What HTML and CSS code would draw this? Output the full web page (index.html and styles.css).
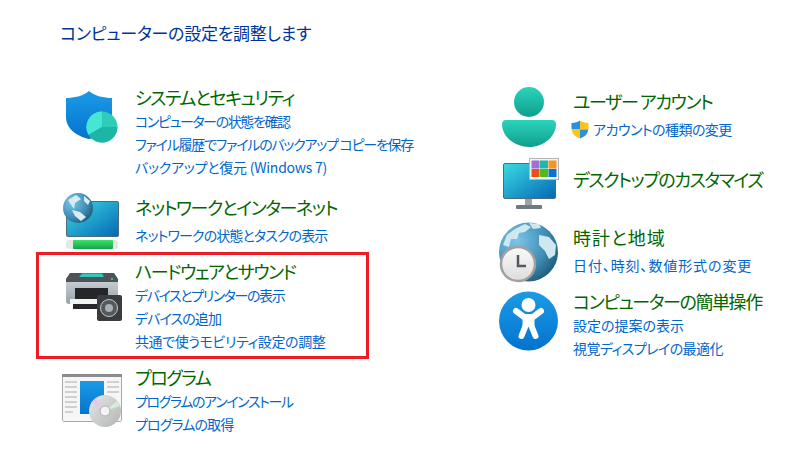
FILE: index.html
```html
<!DOCTYPE html>
<html lang="ja">

<head>
    <meta charset="UTF-8">
    <title>コントロール パネル</title>
    <link rel="stylesheet" href="styles.css">
</head>

<body>
    <svg class="defs" width="0" height="0">
        <defs>
            <linearGradient id="blue" x1="0" y1="0" x2="0" y2="1">
                <stop offset="0" stop-color="#1b9be6" />
                <stop offset="1" stop-color="#0473cf" />
            </linearGradient>
            <linearGradient id="teal" x1="0" y1="0" x2="0" y2="1">
                <stop offset="0" stop-color="#2bd4bc" />
                <stop offset="1" stop-color="#0f9e8c" />
            </linearGradient>
            <linearGradient id="screen" x1="0" y1="0" x2="1" y2="1">
                <stop offset="0" stop-color="#3bdbe4" />
                <stop offset="1" stop-color="#0567b5" />
            </linearGradient>
            <radialGradient id="earth" cx="0.3" cy="0.3" r="0.85">
                <stop offset="0" stop-color="#7cc6e8" />
                <stop offset="0.6" stop-color="#3f8db5" />
                <stop offset="1" stop-color="#17506f" />
            </radialGradient>
            <linearGradient id="bar" x1="0" y1="0" x2="0" y2="1">
                <stop offset="0" stop-color="#3fe06a" />
                <stop offset="1" stop-color="#12a34a" />
            </linearGradient>
            <linearGradient id="disc" x1="0" y1="0" x2="1" y2="1">
                <stop offset="0" stop-color="#e6e8e6" />
                <stop offset="1" stop-color="#b2b5b4" />
            </linearGradient>
            <linearGradient id="printer" x1="0" y1="0" x2="0" y2="1">
                <stop offset="0" stop-color="#d4dce0" />
                <stop offset="1" stop-color="#98a2a8" />
            </linearGradient>
            <linearGradient id="clock-face" x1="0" y1="0" x2="0" y2="1">
                <stop offset="0" stop-color="#fafafa" />
                <stop offset="1" stop-color="#dcdcdc" />
            </linearGradient>
        </defs>
    </svg>

    <h1 class="page-title">コンピューターの設定を調整します</h1>

    <main class="panel">
        <div class="column-left">
            <section class="cat cat-system">
                <svg class="cat-icon" width="70" height="64" viewBox="0 0 70 64">
                    <path d="M29 6 C23 11 14 13 6 13 V32 C6 44 17 51 29 54 C41 51 52 44 52 32 V13 C44 13 35 11 29 6 Z" fill="url(#blue)" />
                    <circle cx="42" cy="42" r="15.5" fill="#2fcdb8" />
                    <path d="M42 42 V26.5 A15.5 15.5 0 0 0 28.6 49.8 Z" fill="#46e6d4" />
                    <path d="M42 42 L28.6 49.8 A15.5 15.5 0 0 0 57.5 42 Z" fill="#1db5a4" />
                </svg>
                <div class="cat-text">
                    <h2 class="head-kana">システムとセキュリティ</h2>
                    <a href="#" class="ls-a">コンピューターの状態を確認</a>
                    <a href="#" class="ls-f">ファイル履歴でファイルのバックアップ コピーを保存</a>
                    <a href="#" class="ls-g">バックアップと復元 (Windows 7)</a>
                </div>
            </section>

            <section class="cat cat-network">
                <svg class="cat-icon" width="70" height="54" viewBox="0 0 70 54">
                    <rect x="6.5" y="6.5" width="52" height="35" rx="1" fill="url(#screen)" stroke="#4f6a78" />
                    <rect x="6" y="45" width="52" height="9" rx="3" fill="#e4e8e4" />
                    <rect x="13" y="45" width="40" height="9" rx="1" fill="url(#bar)" />
                    <circle cx="18" cy="13" r="15" fill="url(#earth)" />
                    <path d="M8 5 L16 0 L21 4 L15 8 L14 14 Z M12 15 L20 17 L26 22 L21 26 L15 21 Z M24 1 L30 6 L28 10 L24 6 Z" fill="#d8edf3" />
                </svg>
                <div class="cat-text cat-text-gap">
                    <h2 class="head-kana">ネットワークとインターネット</h2>
                    <a href="#" class="ls-b">ネットワークの状態とタスクの表示</a>
                </div>
            </section>

            <section class="cat cat-marked">
                <svg class="cat-icon" width="70" height="64" viewBox="0 0 70 64">
                    <path d="M10 14 H54 L58 20 V42 C58 44 57 45 55 45 H9 C7 45 6 44 6 42 V20 Z" fill="url(#printer)" />
                    <path d="M10 14 H54 L58 20 V23 H6 V20 Z" fill="#4d5358" />
                    <path d="M22 14.5 H42 L44 18 H19 Z" fill="#2fc8c0" />
                    <rect x="51" y="19" width="2" height="2" fill="#34c759" />
                    <rect x="15" y="29" width="33" height="12" fill="#24262a" />
                    <rect x="10" y="40" width="32" height="5" fill="#f2f3f3" />
                    <rect x="13" y="45" width="30" height="5" fill="#26282c" />
                    <rect x="37" y="36" width="25" height="26" rx="2" fill="#3a3c40" />
                    <circle cx="49" cy="49" r="8.5" fill="#55585d" stroke="#c4c8cc" />
                    <circle cx="49" cy="49" r="4" fill="#a9b0b8" />
                </svg>
                <div class="cat-text">
                    <h2 class="head-kana">ハードウェアとサウンド</h2>
                    <a href="#" class="ls-a">デバイスとプリンターの表示</a>
                    <a href="#" class="ls-b">デバイスの追加</a>
                    <a href="#" class="ls-d">共通で使うモビリティ設定の調整</a>
                </div>
            </section>

            <section class="cat">
                <svg class="cat-icon" width="70" height="64" viewBox="0 0 70 64">
                    <rect x="2.5" y="9.5" width="59" height="47" rx="1" fill="#f6f6f6" stroke="#a8a8a8" />
                    <rect x="2" y="9" width="60" height="3" fill="#8c8c8c" />
                    <path d="M5 17 H17 M5 22 H17 M5 27 H17 M5 32 H17 M5 37 H17 M5 42 H17 M5 47 H13 M47 17 H59 M47 22 H59 M47 27 H59" stroke="#c4c4c4" stroke-width="1.5" />
                    <rect x="20" y="16" width="24" height="33" fill="url(#blue)" />
                    <circle cx="45" cy="46" r="16" fill="url(#disc)" />
                    <path d="M45 46 L31 38 A16 16 0 0 1 36 33 Z" fill="#e8c8e8" />
                    <path d="M45 46 L57 36 A16 16 0 0 1 60 41 Z" fill="#d4ecd8" />
                    <circle cx="45" cy="46" r="5" fill="#f4f4f4" stroke="#b0b0b0" />
                </svg>
                <div class="cat-text">
                    <h2 class="head-kana">プログラム</h2>
                    <a href="#" class="ls-a">プログラムのアンインストール</a>
                    <a href="#" class="ls-b">プログラムの取得</a>
                </div>
            </section>
        </div>

        <div class="column-right">
            <section class="cat-right cat-user">
                <svg class="cat-icon" width="70" height="60" viewBox="0 0 70 60">
                    <circle cx="34" cy="13" r="15" fill="url(#teal)" />
                    <path d="M11 31 H57 C59.5 31 61 33 61 35 C61 48 48 58 34 58 C20 58 7 48 7 35 C7 33 8.5 31 11 31 Z" fill="url(#teal)" />
                </svg>
                <div class="cat-text cat-text-gap">
                    <h2 class="head-kana">ユーザー アカウント</h2>
                    <a href="#" class="ls-c">
                        <svg class="uac-icon" width="18" height="19" viewBox="0 0 18 19">
                            <path d="M9 0.5 C7 2 4 3 0.5 3 V9.5 H9 Z" fill="#2a8fe0" />
                            <path d="M9 0.5 C11 2 14 3 17.5 3 V9.5 H9 Z" fill="#fcc419" />
                            <path d="M9 9.5 H0.7 C1.2 14 4.5 17 9 18.5 Z" fill="#fcc419" />
                            <path d="M9 9.5 H17.3 C16.8 14 13.5 17 9 18.5 Z" fill="#2a8fe0" />
                        </svg>アカウントの種類の変更</a>
                </div>
            </section>

            <section class="cat-right cat-desktop">
                <svg class="cat-icon" width="70" height="42" viewBox="0 0 70 42">
                    <rect x="30" y="32" width="7" height="6" fill="#9aa4aa" />
                    <rect x="21" y="38" width="26" height="4" rx="1" fill="#6f7a80" />
                    <rect x="8.5" y="-3.5" width="52" height="35" rx="1.5" fill="url(#screen)" stroke="#4f6a78" />
                    <rect x="34.5" y="-8.5" width="29" height="21" fill="#f4f4f4" stroke="#b4b4b4" />
                    <rect x="36.5" y="-6.5" width="8" height="8" fill="#a06fd6" />
                    <rect x="45" y="-6.5" width="8" height="8" fill="#1fb8a6" />
                    <rect x="53.5" y="-6.5" width="8" height="8" fill="#f7941d" />
                    <rect x="36.5" y="2" width="8" height="8" fill="#e8501a" />
                    <rect x="45" y="2" width="8" height="8" fill="#55b81a" />
                    <rect x="53.5" y="2" width="8" height="8" fill="#0078d4" />
                </svg>
                <div class="cat-text">
                    <h2 class="head-kana">デスクトップのカスタマイズ</h2>
                </div>
            </section>

            <section class="cat-right cat-clock">
                <svg class="cat-icon" width="70" height="60" viewBox="0 0 70 60">
                    <circle cx="33.5" cy="27" r="29.5" fill="url(#earth)" />
                    <path d="M8 20 L12 10 L20 4 L30 -1 L36 2 L30 7 L24 8 L22 14 L16 14 L14 22 Z M44 10 L54 12 L61 20 L60 30 L54 34 L50 26 L44 20 Z M34 -2 L44 -1 L46 3 L38 4 Z" fill="#cfe8f0" />
                    <circle cx="23" cy="39" r="17" fill="url(#clock-face)" stroke="#a0a0a0" stroke-width="2.5" />
                    <path d="M23 30 V41 H31" fill="none" stroke="#55585c" stroke-width="2.5" />
                </svg>
                <div class="cat-text cat-text-gap">
                    <h2 class="head-kanji">時計と地域</h2>
                    <a href="#" class="ls-e">日付、時刻、数値形式の変更</a>
                </div>
            </section>

            <section class="cat-right">
                <svg class="cat-icon" width="70" height="62" viewBox="0 0 70 62">
                    <circle cx="33.5" cy="32" r="29.5" fill="url(#blue)" />
                    <circle cx="33.5" cy="16" r="7" fill="#fff" />
                    <path d="M21 22 L29 28 H38 L46 22" fill="none" stroke="#fff" stroke-width="6" stroke-linecap="round" stroke-linejoin="round" />
                    <path d="M27.5 27 H39.5 V38 H27.5 Z" fill="#fff" />
                    <path d="M30.5 37 L26.5 47 M36.5 37 L40.5 47" fill="none" stroke="#fff" stroke-width="6" stroke-linecap="round" />
                </svg>
                <div class="cat-text">
                    <h2 class="head-kana">コンピューターの簡単操作</h2>
                    <a href="#">設定の提案の表示</a>
                    <a href="#" class="ls-c">視覚ディスプレイの最適化</a>
                </div>
            </section>
        </div>
    </main>
</body>

</html>
```

FILE: styles.css
```css
body {
    margin: 0;
    padding: 21px 0 0;
    background-color: #ffffff;
    font-family: "Noto Sans CJK JP", "Noto Sans", sans-serif;
    font-feature-settings: "palt";
    overflow: hidden;
}

.defs {
    display: block;
    height: 0;
}

.page-title {
    margin: 0 0 32px 60px;
    color: #003399;
    font-size: 17px;
    font-weight: 400;
    line-height: 24px;
    letter-spacing: -0.25px;
}

.panel {
    display: flex;
}

.column-left {
    width: 333px;
    margin-left: 36px;
}

.column-right {
    margin-left: 126px;
    padding-top: 12px;
}

.cat {
    display: flex;
    box-sizing: border-box;
    padding-top: 5px;
    border: 3px solid transparent;
}

.cat-system {
    height: 110px;
}

.cat-network {
    height: 65px;
}

.cat-marked {
    height: 107px;
    margin-bottom: -2px;
    padding-top: 4px;
    border-color: #ed1c24;
}

.cat-icon {
    flex: none;
    overflow: visible;
    margin-right: 5px;
}

.cat .cat-icon {
    margin-left: 21px;
}

.cat-right {
    display: flex;
}

.cat-right .cat-icon {
    margin-right: 8px;
}

.cat-user {
    margin-bottom: 18px;
}

.cat-desktop {
    margin-bottom: 16px;
}

.cat-clock {
    margin-bottom: 4px;
}

.cat-text {
    white-space: nowrap;
}

.cat-text h2 {
    margin: 0 0 1px;
    color: #006600;
    font-size: 18px;
    font-weight: 400;
    line-height: 24px;
}

.cat-text-gap h2 {
    margin-bottom: 5px;
}

.cat-text .head-kana {
    letter-spacing: -1.4px;
}

.cat-text .head-kanji {
    letter-spacing: 1px;
}

.cat-text a {
    display: block;
    color: #0066cc;
    font-size: 14px;
    line-height: 23px;
    text-decoration: none;
}

/* kana in the original font runs narrower than in Noto, so links differ */
.cat-text .ls-a {
    letter-spacing: -1.4px;
}

.cat-text .ls-b {
    letter-spacing: -0.9px;
}

.cat-text .ls-c {
    letter-spacing: -0.55px;
}

.cat-text .ls-d {
    letter-spacing: -0.4px;
}

.cat-text .ls-e {
    letter-spacing: 0.9px;
}

.cat-text .ls-f {
    letter-spacing: -1.25px;
}

.cat-text .ls-g {
    letter-spacing: -0.25px;
}

.uac-icon {
    vertical-align: -4px;
    margin: 0 4px 0 -2px;
}
```
